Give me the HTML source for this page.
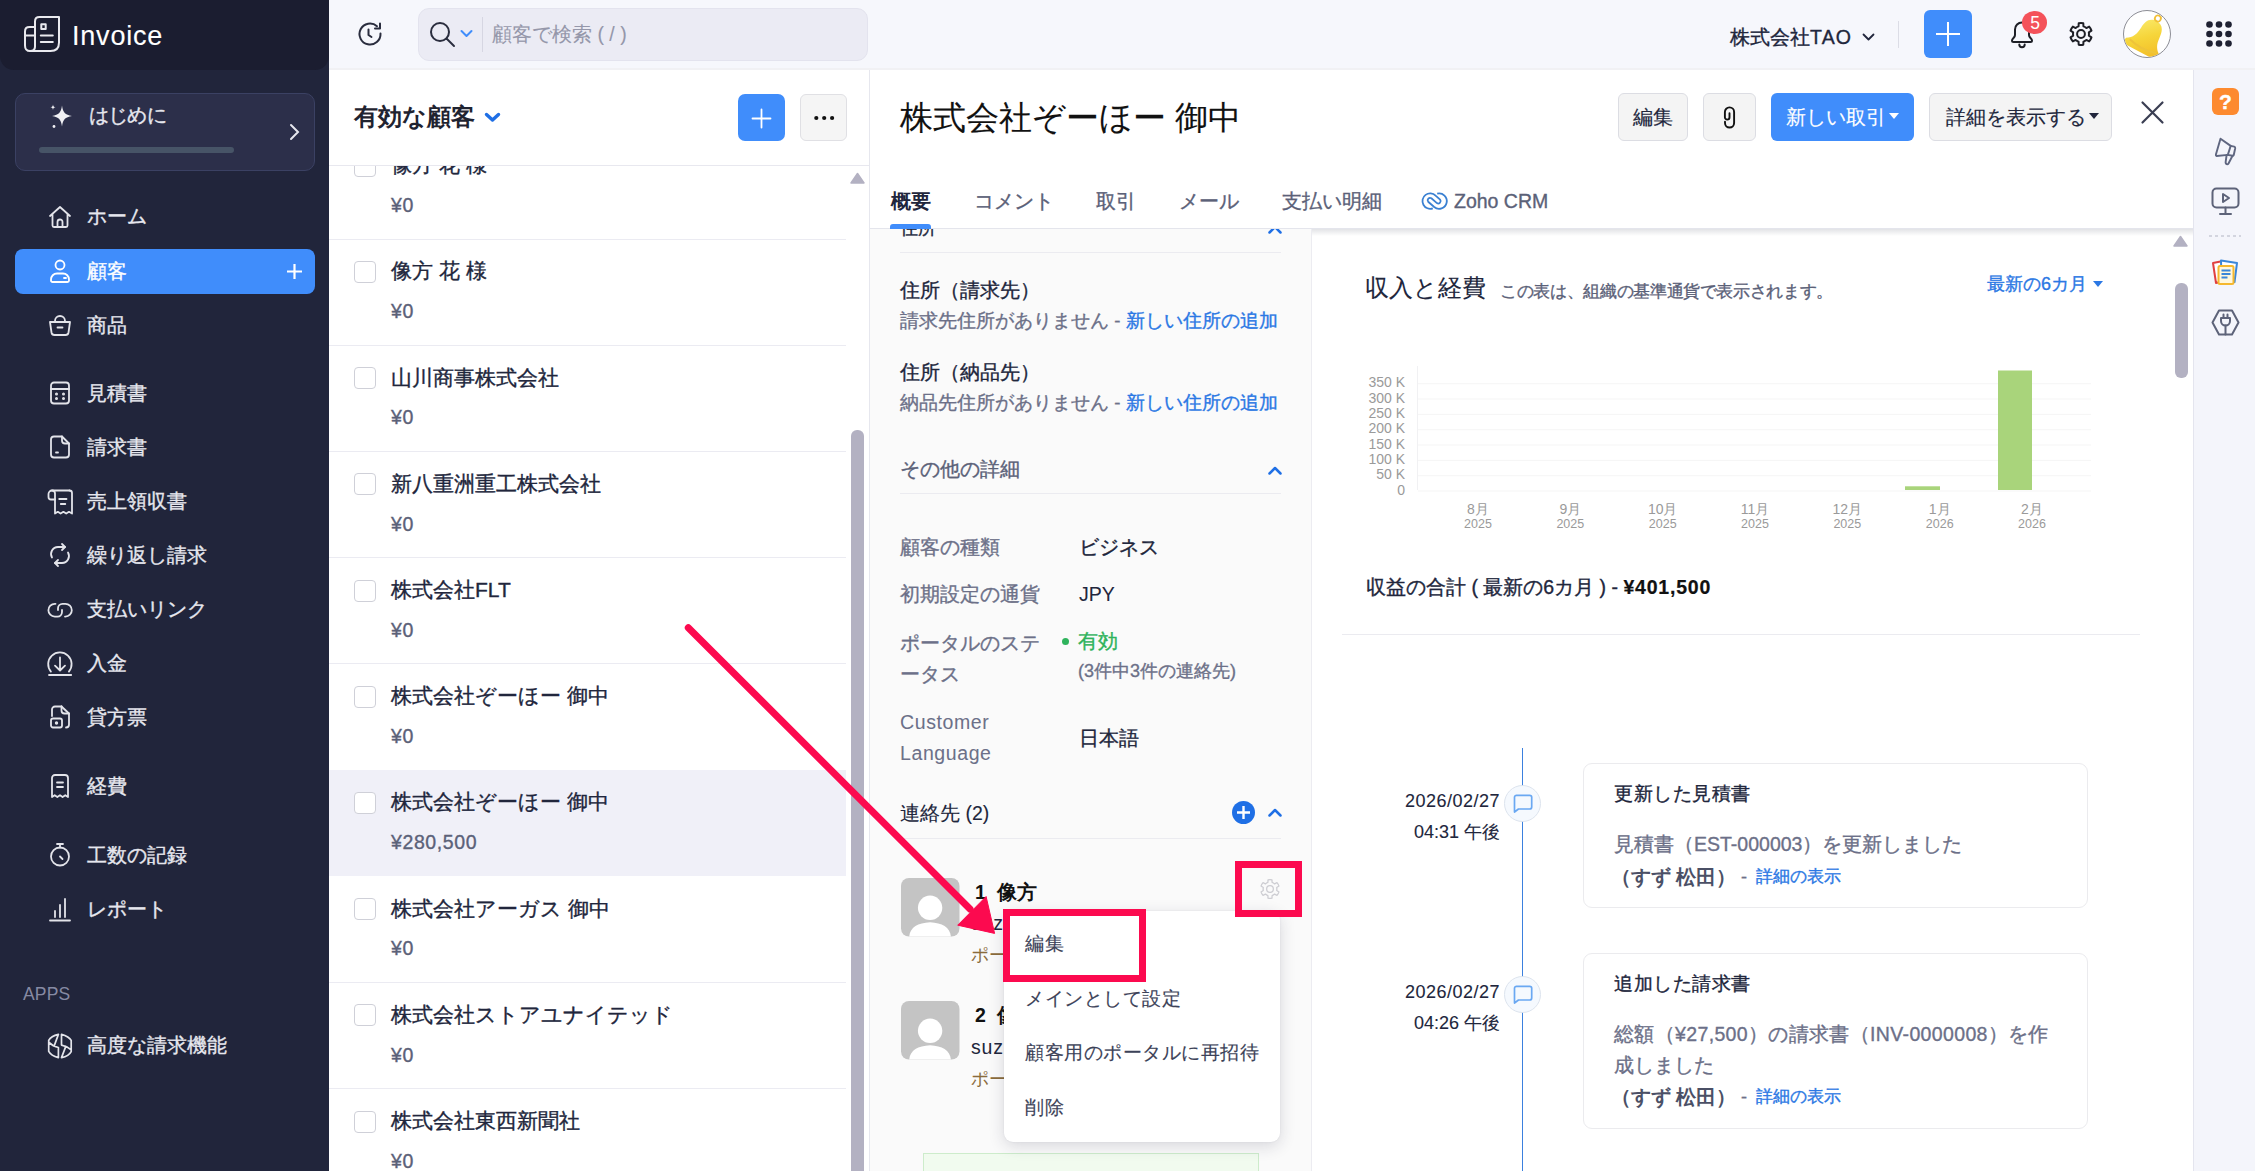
<!DOCTYPE html>
<html><head><meta charset="utf-8">
<style>
*{box-sizing:border-box;margin:0;padding:0}
html,body{width:2255px;height:1171px;overflow:hidden}
body{position:relative;font-family:"Liberation Sans",sans-serif;background:#fff;color:#21263c}
.a{position:absolute}
.t{position:absolute;white-space:nowrap;line-height:30px;-webkit-text-stroke:0.35px currentColor}
svg{position:absolute;overflow:visible}
/* sidebar */
#side{left:0;top:0;width:329px;height:1171px;background:#21253b}
#logo{left:0;top:0;width:329px;height:70px;background:#1b1d30;border-radius:0 0 14px 14px}
.nav{color:#e6e7ee;font-size:19.5px}
.navi{stroke:#e3e4ea;fill:none;stroke-width:1.8;stroke-linecap:round;stroke-linejoin:round}
/* topbar */
#top{left:329px;top:0;width:1926px;height:70px;background:#f6f7fc}
/* list */
#list{left:329px;top:70px;width:541px;height:1101px;background:#fff;border-right:1px solid #e6e7ee}
.cb{position:absolute;left:354px;width:22px;height:22px;border:1.5px solid #cfd0d8;border-radius:4px;background:#fff}
.nm{left:391px;font-size:21px;color:#21263c}
.am{left:391px;font-size:19.5px;color:#5b6178;letter-spacing:0.6px}
.sep{position:absolute;left:329px;width:517px;height:1px;background:#ebebf2}
/* detail */
#det{left:870px;top:70px;width:1323px;height:1101px;background:#fff}
#rail{left:2193px;top:70px;width:62px;height:1101px;background:#f4f5fb;border-left:1px solid #e4e5ee}
.btn{position:absolute;border:1px solid #dcdde3;background:#f4f4f4;border-radius:6px}
</style></head><body>

<!-- SIDEBAR -->
<div id="side" class="a"></div>
<div id="logo" class="a"></div>

<svg style="left:0;top:0" width="80" height="60" viewBox="0 0 80 60" fill="none" stroke="#e9e9ee" stroke-width="2" stroke-linejoin="round" stroke-linecap="round">
<path d="M30 51.1H50.5Q59 51.1 59 42.5V17.1H39.5Q35 17.1 35 21.5V46.6"/><path d="M35 27.1H29.5Q25 27.1 25 31.5V45.5Q25 51.1 30.1 51.1Q35 51.1 35 46.6"/><path d="M25 35.5H35"/>
<rect x="41.3" y="24.3" width="4.4" height="4.7"/><path d="M40.8 35.5H52.8M40.8 42H52.8"/></svg>
<div class="t" style="left:72px;top:19px;font-size:27px;color:#fff;line-height:34px;-webkit-text-stroke:0.1px currentColor;letter-spacing:0.8px">Invoice</div>
<div class="a" style="left:15px;top:93px;width:300px;height:78px;background:#2c2f4a;border:1.5px solid #3b4163;border-radius:10px"></div>
<svg style="left:40px;top:100px" width="40" height="32" viewBox="0 0 40 32" fill="#f0f0f4"><path d="M22 5.5C23 12.5 25 14.8 32 16C25 17.2 23 19.5 22 26.5C21 19.5 19 17.2 12 16C19 14.8 21 12.5 22 5.5z"/><path d="M13 4.5C13.3 6.5 13.8 7 15.6 7.3C13.8 7.6 13.3 8.1 13 10.1C12.7 8.1 12.2 7.6 10.4 7.3C12.2 7 12.7 6.5 13 4.5z"/><circle cx="14" cy="26.5" r="1.4"/></svg>
<div class="t nav" style="left:89px;top:100px;letter-spacing:-0.8px">はじめに</div>
<svg style="left:287px;top:123px" width="14" height="18" viewBox="0 0 14 18" fill="none" stroke="#e6e7ee" stroke-width="2" stroke-linecap="round"><path d="M4 2l7 7l-7 7"/></svg>
<div class="a" style="left:39px;top:147px;width:195px;height:6px;background:#475467;border-radius:3px"></div>

<!-- nav items -->
<svg class="navi" style="left:47px;top:204px" width="26" height="26" viewBox="0 0 26 26"><path d="M3 12L13 3l10 9M5.5 10v11.5a1.5 1.5 0 0 0 1.5 1.5h12a1.5 1.5 0 0 0 1.5-1.5V10"/><path d="M10.5 23v-5a2.5 2.5 0 0 1 5 0v5"/></svg>
<div class="t nav" style="left:87px;top:201px">ホーム</div>

<div class="a" style="left:15px;top:249px;width:300px;height:45px;background:#408dfb;border-radius:8px"></div>
<svg class="navi" style="left:47px;top:258px;stroke:#fff" width="26" height="26" viewBox="0 0 26 26"><circle cx="13" cy="7" r="4.5"/><path d="M4 22.5v-1a6 6 0 0 1 6-6h6a6 6 0 0 1 6 6v1a1.5 1.5 0 0 1-1.5 1.5h-15A1.5 1.5 0 0 1 4 22.5z"/><path d="M17 20h2"/></svg>
<div class="t nav" style="left:87px;top:256px;color:#fff">顧客</div>
<svg style="left:286px;top:263px" width="17" height="17" viewBox="0 0 17 17" stroke="#fff" stroke-width="2.2"><path d="M8.5 1v15M1 8.5h15"/></svg>

<svg class="navi" style="left:47px;top:312px" width="26" height="26" viewBox="0 0 26 26"><path d="M8 9a5 5 0 0 1 10 0"/><path d="M3 10h20l-1.5 10.5a3 3 0 0 1-3 2.5h-11a3 3 0 0 1-3-2.5z"/><path d="M10.5 15.5h5"/></svg>
<div class="t nav" style="left:87px;top:310px">商品</div>

<svg class="navi" style="left:47px;top:380px" width="26" height="26" viewBox="0 0 26 26"><rect x="4" y="2.5" width="18" height="21" rx="3"/><path d="M4 9h18"/><circle cx="9.5" cy="14" r=".6" fill="#e3e4ea"/><circle cx="16.5" cy="14" r=".6" fill="#e3e4ea"/><circle cx="9.5" cy="18.5" r=".6" fill="#e3e4ea"/><circle cx="16.5" cy="18.5" r=".6" fill="#e3e4ea"/></svg>
<div class="t nav" style="left:87px;top:378px">見積書</div>

<svg class="navi" style="left:47px;top:434px" width="26" height="26" viewBox="0 0 26 26"><path d="M15 2.5H7a3 3 0 0 0-3 3v15a3 3 0 0 0 3 3h12a3 3 0 0 0 3-3V9.5z"/><path d="M15 2.5v4a3 3 0 0 0 3 3h4"/><path d="M9 18.5h2"/></svg>
<div class="t nav" style="left:87px;top:432px">請求書</div>

<svg class="navi" style="left:40px;top:485px;stroke-width:1.8" width="40" height="35" viewBox="40 485 40 35"><path d="M69.5 490.5H52A3.5 3.5 0 0 0 48.5 494V497A2.5 2.5 0 0 0 51 499.5H55"/><path d="M52 490.5A3 3 0 0 1 55 493.5V513.5L57.8 511.8L60.6 513.5L63.4 511.8L66.2 513.5L69 511.8L72 513.5V493A2.5 2.5 0 0 0 69.5 490.5"/><path d="M59.2 499H66.5M60.8 504H65.3"/></svg>
<div class="t nav" style="left:87px;top:486px">売上領収書</div>

<svg class="navi" style="left:47px;top:542px" width="26" height="26" viewBox="0 0 26 26"><path d="M15 2l3 3-3 3"/><path d="M18 5H11a7 7 0 0 0-6 10.5"/><path d="M11 24l-3-3 3-3"/><path d="M8 21h7a7 7 0 0 0 6-10.5"/></svg>
<div class="t nav" style="left:87px;top:540px">繰り返し請求</div>

<svg class="navi" style="left:40px;top:590px;stroke-width:1.8" width="40" height="90" viewBox="40 590 40 90"><path d="M55.5 603.8H54.8A6.4 6.4 0 0 0 54.8 616.6H57.5A4.5 4.5 0 0 0 62 612.1V610"/><path d="M65 616.6H65.4A6.4 6.4 0 0 0 65.4 603.8H62.5A4.5 4.5 0 0 0 58 608.3V610"/></svg>
<div class="t nav" style="left:87px;top:594px">支払いリンク</div>

<svg class="navi" style="left:40px;top:640px;stroke-width:1.8" width="40" height="50" viewBox="40 640 40 50"><path d="M50.9 671.6A11.7 11.7 0 1 1 68.9 671.6M60 657.5V670.3M55 665.6L60 670.5L65 665.6M49 675H71.2"/></svg>
<div class="t nav" style="left:87px;top:648px">入金</div>

<svg class="navi" style="left:47px;top:704px" width="26" height="26" viewBox="0 0 26 26"><path d="M14.5 2.5H8a3 3 0 0 0-3 3V12"/><path d="M14.5 2.5v4a3 3 0 0 0 3 3H22"/><path d="M14.5 2.5L22 9.5v11a3 3 0 0 1-3 3"/><rect x="4" y="14.5" width="11" height="9" rx="2"/><circle cx="9.5" cy="19" r=".8" fill="#e3e4ea"/></svg>
<div class="t nav" style="left:87px;top:702px">貸方票</div>

<svg class="navi" style="left:47px;top:773px" width="26" height="26" viewBox="0 0 26 26"><path d="M5 24V5a3 3 0 0 1 3-3h10a3 3 0 0 1 3 3v19l-2.7-1.8-2.7 1.8-2.6-1.8-2.7 1.8-2.6-1.8z"/><path d="M10 9.5h6M10 14h6"/></svg>
<div class="t nav" style="left:87px;top:771px">経費</div>

<svg class="navi" style="left:47px;top:842px" width="26" height="26" viewBox="0 0 26 26"><circle cx="13" cy="14.5" r="9"/><path d="M10 2h6M13 2v3.5M13 14.5l2.5 2.5"/></svg>
<div class="t nav" style="left:87px;top:840px">工数の記録</div>

<svg class="navi" style="left:47px;top:896px" width="26" height="26" viewBox="0 0 26 26"><path d="M8 21v-6M13 21V9M18 21V3M3 24.5h20"/></svg>
<div class="t nav" style="left:87px;top:894px">レポート</div>

<div class="t" style="left:23px;top:980.5px;font-size:17.5px;color:#868aa3;line-height:26px;-webkit-text-stroke:0;letter-spacing:0.2px">APPS</div>

<svg class="navi" style="left:40px;top:1025px;stroke-width:1.7" width="40" height="40" viewBox="0 0 40 40"><path d="M18.4 9.4Q11 11 8.7 15.4V26.3Q11 30.5 18.4 32.6V22.5Q13 21.5 8.7 17.2M18.4 9.4L14.3 20.6"/><path d="M21.5 32.6Q29 31 31.2 26.6V15.4Q29 11.5 21.5 9.4V20.1Q27 21 31.2 24.8M21.5 32.6L25.8 21.4"/></svg>
<div class="t nav" style="left:87px;top:1030px">高度な請求機能</div>

<!-- TOPBAR -->
<div id="top" class="a"></div><div class="a" style="left:329px;top:68px;width:1926px;height:2px;background:#f1f1f4"></div>
<svg style="left:357px;top:21px" width="27" height="27" viewBox="0 0 27 27" fill="none" stroke="#2a2d3e" stroke-width="2" stroke-linecap="round" stroke-linejoin="round"><path d="M23.5 12.5A10.5 10.5 0 1 1 20 5.2"/><path d="M23 2.5v5h-5"/><path d="M11.5 8.5v5.5l3 2"/></svg>
<div class="a" style="left:418px;top:8px;width:450px;height:53px;background:#ebebf4;border:1px solid #e3e3ee;border-radius:11px"></div>
<svg style="left:429px;top:21px" width="27" height="27" viewBox="0 0 27 27" fill="none" stroke="#2a2d3e" stroke-width="2" stroke-linecap="round"><circle cx="11" cy="11" r="9"/><path d="M17.5 17.5l7.5 7.5"/></svg>
<svg style="left:460px;top:29px" width="13" height="9" viewBox="0 0 13 9" fill="none" stroke="#408dfb" stroke-width="2" stroke-linecap="round" stroke-linejoin="round"><path d="M1.5 2l5 5 5-5"/></svg>
<div class="a" style="left:482px;top:17px;width:1px;height:35px;background:#d6d6e2"></div>
<div class="t" style="left:492px;top:19px;font-size:19.5px;color:#9597aa;-webkit-text-stroke:0.1px currentColor">顧客で検索 ( / )</div>

<div class="t" style="left:1730px;top:22px;font-size:19.5px;color:#21263c">株式会社<span style="letter-spacing:1.2px">TAO</span></div>
<svg style="left:1862px;top:32px" width="13" height="10" viewBox="0 0 13 10" fill="none" stroke="#21263c" stroke-width="1.8" stroke-linecap="round" stroke-linejoin="round"><path d="M1.5 2.5l5 5 5-5"/></svg>
<div class="a" style="left:1898px;top:21px;width:1px;height:27px;background:#dcdde6"></div>
<div class="a" style="left:1924px;top:10px;width:48px;height:48px;background:#408dfb;border-radius:6px"></div>
<svg style="left:1936px;top:22px" width="24" height="24" viewBox="0 0 24 24" stroke="#fff" stroke-width="2"><path d="M12 0v24M0 12h24"/></svg>
<svg style="left:2008px;top:19px" width="28" height="30" viewBox="0 0 28 30" fill="none" stroke="#1e1f26" stroke-width="2" stroke-linecap="round" stroke-linejoin="round"><path d="M14 3.5A7 7 0 0 0 7 10.5V16Q7 17.5 5.5 19Q4 20.5 4 21.5Q4 23 5.5 23H22.5Q24 23 24 21.5Q24 20.5 22.5 19Q21 17.5 21 16V10.5A7 7 0 0 0 14 3.5z"/><path d="M11.3 25.5a2.7 2.7 0 0 0 5.4 0"/></svg>
<div class="a" style="left:2022px;top:11px;width:25px;height:22.5px;background:#f4525a;border-radius:50%"></div>
<div class="t" style="left:2022.5px;top:9.3px;width:25px;text-align:center;font-size:17.5px;color:#fff;line-height:28px;-webkit-text-stroke:0">5</div>
<svg style="left:2067px;top:20px" width="28" height="28" viewBox="0 0 28 28" fill="none" stroke="#1e1f26" stroke-width="2" stroke-linejoin="round"><path d="M11.71 3.24A11 11 0 0 1 16.29 3.24L16.47 6.39A8 8 0 0 1 19.35 8.05L22.17 6.64A11 11 0 0 1 24.46 10.60L21.83 12.34A8 8 0 0 1 21.83 15.66L24.46 17.40A11 11 0 0 1 22.17 21.36L19.35 19.95A8 8 0 0 1 16.47 21.61L16.29 24.76A11 11 0 0 1 11.71 24.76L11.53 21.61A8 8 0 0 1 8.65 19.95L5.83 21.36A11 11 0 0 1 3.54 17.40L6.17 15.66A8 8 0 0 1 6.17 12.34L3.54 10.60A11 11 0 0 1 5.83 6.64L8.65 8.05A8 8 0 0 1 11.53 6.39L11.71 3.24z"/><circle cx="14" cy="14" r="3.9"/></svg>
<div class="a" style="left:2123px;top:10px;width:48px;height:48px;border-radius:50%;background:#fff;border:1.2px solid #8d8e96;overflow:hidden">
<svg style="left:0;top:0" width="46" height="46" viewBox="0 0 46 46"><defs><linearGradient id="bg1" x1="0" y1="0" x2="1" y2="1"><stop offset="0" stop-color="#fbf07a"/><stop offset=".5" stop-color="#f6d53a"/><stop offset="1" stop-color="#f2b824"/></linearGradient></defs>
<g transform="rotate(28 24 26)"><path d="M24 8C16 8 14 14 13.5 21C13 29 11 33 5 37C4 39 6 43 10 43L38 43C42 43 44 39 43 37C37 33 35 29 34.5 21C34 14 32 8 24 8z" fill="url(#bg1)"/><path d="M9 36.5Q24 41 39 36.5" stroke="#eec43a" stroke-width="2" fill="none"/><circle cx="24" cy="5" r="3" fill="none" stroke="#f2c038" stroke-width="1.8"/></g></svg></div>
<svg style="left:2206px;top:21px" width="26" height="26" viewBox="0 0 26 26" fill="#1e2132"><circle cx="3.5" cy="3.5" r="3.3"/><circle cx="13" cy="3.5" r="3.3"/><circle cx="22.5" cy="3.5" r="3.3"/><circle cx="3.5" cy="13" r="3.3"/><circle cx="13" cy="13" r="3.3"/><circle cx="22.5" cy="13" r="3.3"/><circle cx="3.5" cy="22.5" r="3.3"/><circle cx="13" cy="22.5" r="3.3"/><circle cx="22.5" cy="22.5" r="3.3"/></svg>

<!-- LIST -->
<div id="list" class="a"></div>
<div class="t" style="left:354px;top:100px;font-size:23.5px;font-weight:bold;color:#1f2330;line-height:34px;-webkit-text-stroke:0">有効な顧客</div>
<svg style="left:484px;top:111px" width="17" height="13" viewBox="0 0 17 13" fill="none" stroke="#1f6fe5" stroke-width="3.4" stroke-linecap="round" stroke-linejoin="round"><path d="M2.5 3.5l6 5.5 6-5.5"/></svg>
<div class="a" style="left:738px;top:94px;width:47px;height:47px;background:#408dfb;border-radius:7px"></div>
<svg style="left:751px;top:107.5px" width="21" height="21" viewBox="0 0 21 21" stroke="#fff" stroke-width="1.8" stroke-linecap="round"><path d="M10.5 1.5v18M1.5 10.5h18"/></svg>
<div class="btn" style="left:800px;top:94px;width:47px;height:47px;background:#f5f5f5;border-color:#e0e0e4"></div>
<svg style="left:813px;top:115px" width="22" height="6" viewBox="0 0 22 6" fill="#111"><circle cx="3.3" cy="3" r="2.1"/><circle cx="11.2" cy="3" r="2.1"/><circle cx="19.1" cy="3" r="2.1"/></svg>
<div id="rows" class="a" style="left:0;top:165px;width:869px;height:1006px;overflow:hidden">
<div class="cb" style="top:-10.2px"></div>
<div class="t nm" style="top:-14.8px">像方 花 様</div>
<div class="t am" style="top:24.9px">¥0</div>
<div class="sep" style="top:73.5px"></div>
<div class="cb" style="top:96.0px"></div>
<div class="t nm" style="top:91.4px">像方 花 様</div>
<div class="t am" style="top:131.1px">¥0</div>
<div class="sep" style="top:179.7px"></div>
<div class="cb" style="top:202.2px"></div>
<div class="t nm" style="top:197.6px">山川商事株式会社</div>
<div class="t am" style="top:237.3px">¥0</div>
<div class="sep" style="top:285.9px"></div>
<div class="cb" style="top:308.4px"></div>
<div class="t nm" style="top:303.8px">新八重洲重工株式会社</div>
<div class="t am" style="top:343.5px">¥0</div>
<div class="sep" style="top:392.1px"></div>
<div class="cb" style="top:414.6px"></div>
<div class="t nm" style="top:410.0px">株式会社FLT</div>
<div class="t am" style="top:449.7px">¥0</div>
<div class="sep" style="top:498.3px"></div>
<div class="cb" style="top:520.8px"></div>
<div class="t nm" style="top:516.2px">株式会社ぞーほー 御中</div>
<div class="t am" style="top:555.9px">¥0</div>
<div class="a" style="left:329px;top:604.5px;width:517px;height:106.2px;background:#f0f0f8"></div>
<div class="cb" style="top:627.0px"></div>
<div class="t nm" style="top:622.4px">株式会社ぞーほー 御中</div>
<div class="t am" style="top:662.1px">¥280,500</div>
<div class="cb" style="top:733.2px"></div>
<div class="t nm" style="top:728.6px">株式会社アーガス 御中</div>
<div class="t am" style="top:768.3px">¥0</div>
<div class="sep" style="top:816.9px"></div>
<div class="cb" style="top:839.4px"></div>
<div class="t nm" style="top:834.8px">株式会社ストアユナイテッド</div>
<div class="t am" style="top:874.5px">¥0</div>
<div class="sep" style="top:923.1px"></div>
<div class="cb" style="top:945.6px"></div>
<div class="t nm" style="top:941.0px">株式会社東西新聞社</div>
<div class="t am" style="top:980.7px">¥0</div>
<div class="a" style="left:848px;top:0;width:18px;height:1006px;background:#fff"></div>
<svg style="left:850px;top:7px" width="15" height="12" viewBox="0 0 15 12"><path d="M7.5 1.5L14 11H1z" fill="#b3b1c2" stroke="#b3b1c2" stroke-width="1.5" stroke-linejoin="round"/></svg>
<div class="a" style="left:851px;top:265px;width:13px;height:760px;background:#b3b1c2;border-radius:6px"></div>
</div>
<div class="a" style="left:329px;top:165px;width:540px;height:1px;background:#e8e8ef"></div>

<!-- DETAIL -->
<div id="det" class="a"></div>
<div class="t" style="left:900px;top:98px;font-size:33px;color:#111;line-height:40px;-webkit-text-stroke:0.1px currentColor">株式会社ぞーほー 御中</div>
<div class="btn" style="left:1618px;top:93px;width:70px;height:48px"></div>
<div class="t" style="left:1618px;top:102px;width:70px;text-align:center;font-size:19.5px;color:#21263c;-webkit-text-stroke:0.15px currentColor">編集</div>
<div class="btn" style="left:1703px;top:93px;width:53px;height:48px"></div>
<svg style="left:1715px;top:100px" width="30" height="35" viewBox="0 0 30 35" fill="none" stroke="#111" stroke-width="1.9" stroke-linecap="round"><path d="M10 21.8V23A4.55 4.55 0 0 0 19.1 23V12A4.6 4.6 0 0 0 9.9 12V17.3A2.3 2.3 0 0 0 14.5 17.3V13.2"/></svg>
<div class="a" style="left:1771px;top:93px;width:143px;height:48px;background:#408dfb;border-radius:6px"></div>
<div class="t" style="left:1786px;top:102px;font-size:19.5px;color:#fff;-webkit-text-stroke:0.15px currentColor">新しい取引</div>
<svg style="left:1889px;top:113px" width="10" height="6" viewBox="0 0 10 6" fill="#fff"><path d="M0 0h10L5 6z"/></svg>
<div class="btn" style="left:1929px;top:93px;width:183px;height:48px"></div>
<div class="t" style="left:1946px;top:102px;font-size:19.5px;color:#21263c;-webkit-text-stroke:0.15px currentColor">詳細を表示する</div>
<svg style="left:2089px;top:113px" width="10" height="6" viewBox="0 0 10 6" fill="#21263c"><path d="M0 0h10L5 6z"/></svg>
<svg style="left:2141px;top:101px" width="23" height="23" viewBox="0 0 23 23" stroke="#3a3e52" stroke-width="2.2" stroke-linecap="round"><path d="M1.5 1.5l20 20M21.5 1.5l-20 20"/></svg>

<!-- tabs -->
<div class="t" style="left:891px;top:186px;font-size:19.5px;font-weight:bold;color:#21263c;-webkit-text-stroke:0">概要</div>
<div class="t" style="left:974px;top:186px;font-size:19.5px;color:#5b6178">コメント</div>
<div class="t" style="left:1096px;top:186px;font-size:19.5px;color:#5b6178">取引</div>
<div class="t" style="left:1179px;top:186px;font-size:19.5px;color:#5b6178">メール</div>
<div class="t" style="left:1282px;top:186px;font-size:19.5px;color:#5b6178">支払い明細</div>
<svg style="left:1415px;top:185px" width="40" height="35" viewBox="0 0 40 35" fill="none" stroke="#3a80d2" stroke-width="1.8" stroke-linecap="butt"><path d="M17.8 23.3A7.7 7.7 0 1 1 20.6 10.6L25.1 14.6A2.4 2.4 0 0 1 21.9 18.1L16.4 13.3A2.4 2.4 0 0 0 13.2 16.8L19.2 22A7.7 7.7 0 1 0 22.2 8.6"/></svg>
<div class="t" style="left:1454px;top:186px;font-size:19.5px;color:#5b6178">Zoho CRM</div>

<!-- left column -->
<div class="a" style="left:870px;top:229px;width:442px;height:942px;background:#fafafa;border-right:1px solid #ececf1"></div>
<div class="a" style="left:870px;top:228px;width:1323px;height:1px;background:#e4e5ec"></div>
<div class="a" style="left:1312px;top:229px;width:881px;height:7px;background:linear-gradient(#e2e3e6,rgba(255,255,255,0))"></div>
<div class="a" style="left:890px;top:224px;width:41px;height:5px;background:#408dfb;border-radius:3px 3px 0 0"></div>
<div class="a" style="left:870px;top:229px;width:442px;height:28px;overflow:hidden">
 <div class="t" style="left:30px;top:-16px;font-size:18px;color:#21263c">住所</div>
 <svg style="left:398px;top:-4px" width="14" height="9" viewBox="0 0 14 9" fill="none" stroke="#1f6fe5" stroke-width="2.5" stroke-linecap="round" stroke-linejoin="round"><path d="M1.5 7.5l5.5-5.5 5.5 5.5"/></svg>
</div>
<div class="a" style="left:900px;top:252px;width:381px;height:1px;background:#ebebf0"></div>
<div class="t" style="left:900px;top:275px;font-size:19.5px;color:#21263c">住所（請求先）</div>
<div class="t" style="left:900px;top:306px;font-size:18.6px;color:#6c7088">請求先住所がありません - <span style="color:#2b78e4">新しい住所の追加</span></div>
<div class="t" style="left:900px;top:357px;font-size:19.5px;color:#21263c">住所（納品先）</div>
<div class="t" style="left:900px;top:388px;font-size:18.6px;color:#6c7088">納品先住所がありません - <span style="color:#2b78e4">新しい住所の追加</span></div>
<div class="t" style="left:900px;top:454px;font-size:19.5px;color:#5b6178">その他の詳細</div>
<svg style="left:1268px;top:466px" width="14" height="9" viewBox="0 0 14 9" fill="none" stroke="#1f6fe5" stroke-width="2.5" stroke-linecap="round" stroke-linejoin="round"><path d="M1.5 7.5l5.5-5.5 5.5 5.5"/></svg>
<div class="a" style="left:900px;top:493px;width:381px;height:1px;background:#ebebf0"></div>

<div class="t" style="left:900px;top:532px;font-size:19.5px;color:#6c7088">顧客の種類</div>
<div class="t" style="left:1079px;top:532px;font-size:19.5px;color:#21263c">ビジネス</div>
<div class="t" style="left:900px;top:579px;font-size:19.5px;color:#6c7088">初期設定の通貨</div>
<div class="t" style="left:1079px;top:579px;font-size:19.5px;color:#21263c;-webkit-text-stroke:0.05px currentColor">JPY</div>
<div class="t" style="left:900px;top:628px;font-size:19.5px;color:#6c7088">ポータルのステ</div>
<div class="t" style="left:900px;top:659px;font-size:19.5px;color:#6c7088">ータス</div>
<div class="a" style="left:1062px;top:638px;width:7px;height:7px;border-radius:50%;background:#2fb35c"></div>
<div class="t" style="left:1078px;top:626px;font-size:19.5px;color:#2fb35c">有効</div>
<div class="t" style="left:1078px;top:656px;font-size:18px;color:#6c7088">(3件中3件の連絡先)</div>
<div class="t" style="left:900px;top:707px;font-size:19.5px;color:#6c7088;-webkit-text-stroke:0.05px currentColor;letter-spacing:0.6px">Customer</div>
<div class="t" style="left:900px;top:738px;font-size:19.5px;color:#6c7088;-webkit-text-stroke:0.05px currentColor;letter-spacing:0.6px">Language</div>
<div class="t" style="left:1079px;top:723px;font-size:19.5px;color:#21263c">日本語</div>

<div class="t" style="left:900px;top:798px;font-size:19.5px;color:#21263c;-webkit-text-stroke:0.1px currentColor">連絡先 (2)</div>
<svg style="left:1232px;top:801px" width="23" height="23" viewBox="0 0 23 23"><circle cx="11.5" cy="11.5" r="11.5" fill="#1f6fe5"/><path d="M11.5 5v13M5 11.5h13" stroke="#fff" stroke-width="2.4"/></svg>
<svg style="left:1268px;top:808px" width="14" height="9" viewBox="0 0 14 9" fill="none" stroke="#1f6fe5" stroke-width="2.5" stroke-linecap="round" stroke-linejoin="round"><path d="M1.5 7.5l5.5-5.5 5.5 5.5"/></svg>
<div class="a" style="left:900px;top:838px;width:381px;height:1px;background:#ebebf0"></div>

<!-- contacts -->
<svg style="left:901px;top:877.7px" width="58.5" height="58.6" viewBox="0 0 58.5 58.6"><rect width="58.5" height="58.6" rx="8" fill="#c4c4c4"/><circle cx="29.1" cy="29.8" r="12.2" fill="#fff"/><path d="M8.2 58.6C9 49 17 44.8 29.1 44.2C41 44.8 49 49 49.9 58.6z" fill="#fff"/></svg>
<div class="t" style="left:975px;top:877px;font-size:19.5px;font-weight:bold;color:#111;-webkit-text-stroke:0">1&nbsp; 像方</div>
<div class="t" style="left:971px;top:908px;font-size:19.5px;color:#21263c;-webkit-text-stroke:0;letter-spacing:0.8px">suzuki</div>
<div class="t" style="left:971px;top:940px;font-size:18px;color:#8b6c3c;-webkit-text-stroke:0.05px currentColor">ポータル</div>
<svg style="left:1258px;top:877px" width="24" height="24" viewBox="0 0 28 28" fill="none" stroke="#cdcdd2" stroke-width="1.5" stroke-linejoin="round"><path d="M11.71 3.24A11 11 0 0 1 16.29 3.24L16.47 6.39A8 8 0 0 1 19.35 8.05L22.17 6.64A11 11 0 0 1 24.46 10.60L21.83 12.34A8 8 0 0 1 21.83 15.66L24.46 17.40A11 11 0 0 1 22.17 21.36L19.35 19.95A8 8 0 0 1 16.47 21.61L16.29 24.76A11 11 0 0 1 11.71 24.76L11.53 21.61A8 8 0 0 1 8.65 19.95L5.83 21.36A11 11 0 0 1 3.54 17.40L6.17 15.66A8 8 0 0 1 6.17 12.34L3.54 10.60A11 11 0 0 1 5.83 6.64L8.65 8.05A8 8 0 0 1 11.53 6.39L11.71 3.24z"/><circle cx="14" cy="14" r="3.9"/></svg>

<svg style="left:901px;top:1000.7px" width="58.5" height="58.6" viewBox="0 0 58.5 58.6"><rect width="58.5" height="58.6" rx="8" fill="#c4c4c4"/><circle cx="29.1" cy="29.8" r="12.2" fill="#fff"/><path d="M8.2 58.6C9 49 17 44.8 29.1 44.2C41 44.8 49 49 49.9 58.6z" fill="#fff"/></svg>
<div class="t" style="left:975px;top:1000px;font-size:19.5px;font-weight:bold;color:#111;-webkit-text-stroke:0">2&nbsp; 像方</div>
<div class="t" style="left:971px;top:1032px;font-size:19.5px;color:#21263c;-webkit-text-stroke:0;letter-spacing:0.8px">suzuki</div>
<div class="t" style="left:971px;top:1064px;font-size:18px;color:#8b6c3c;-webkit-text-stroke:0.05px currentColor">ポータル</div>
<div class="a" style="left:923px;top:1153px;width:336px;height:30px;background:#f1fbef;border:1px solid #cdeccb"></div>

<!-- right column -->
<div class="t" style="left:1365px;top:271px;font-size:24px;color:#21263c;line-height:34px;-webkit-text-stroke:0.1px currentColor">収入と経費</div>
<div class="t" style="left:1500px;top:279px;font-size:16.5px;color:#5b6178;line-height:24px;letter-spacing:-0.35px">この表は、組織の基準通貨で表示されます。</div>
<div class="t" style="left:1987px;top:269px;font-size:18px;color:#2b78e4">最新の6カ月</div>
<svg style="left:2093px;top:281px" width="10" height="6" viewBox="0 0 10 6" fill="#2b78e4"><path d="M0 0h10L5 6z"/></svg>
<svg style="left:2173px;top:235px" width="15" height="12" viewBox="0 0 15 12"><path d="M7.5 1.5L14 11H1z" fill="#b3b1c2" stroke="#b3b1c2" stroke-width="1.5" stroke-linejoin="round"/></svg>
<div class="a" style="left:2175px;top:283px;width:13px;height:95px;background:#b3b1c2;border-radius:6px"></div>

<div class="t" style="left:1345px;top:372.2px;width:60px;text-align:right;font-size:14px;color:#9a9a9a;line-height:20px;-webkit-text-stroke:0">350 K</div>
<div class="t" style="left:1345px;top:387.5px;width:60px;text-align:right;font-size:14px;color:#9a9a9a;line-height:20px;-webkit-text-stroke:0">300 K</div>
<div class="t" style="left:1345px;top:402.9px;width:60px;text-align:right;font-size:14px;color:#9a9a9a;line-height:20px;-webkit-text-stroke:0">250 K</div>
<div class="t" style="left:1345px;top:418.2px;width:60px;text-align:right;font-size:14px;color:#9a9a9a;line-height:20px;-webkit-text-stroke:0">200 K</div>
<div class="t" style="left:1345px;top:433.5px;width:60px;text-align:right;font-size:14px;color:#9a9a9a;line-height:20px;-webkit-text-stroke:0">150 K</div>
<div class="t" style="left:1345px;top:448.9px;width:60px;text-align:right;font-size:14px;color:#9a9a9a;line-height:20px;-webkit-text-stroke:0">100 K</div>
<div class="t" style="left:1345px;top:464.2px;width:60px;text-align:right;font-size:14px;color:#9a9a9a;line-height:20px;-webkit-text-stroke:0">50 K</div>
<div class="t" style="left:1345px;top:479.5px;width:60px;text-align:right;font-size:14px;color:#9a9a9a;line-height:20px;-webkit-text-stroke:0">0</div>
<svg style="left:0;top:0" width="2255" height="1171" viewBox="0 0 2255 1171">
<rect x="1418" y="383.2" width="673" height="1" fill="#f5f5f6"/>
<rect x="1418" y="398.5" width="673" height="1" fill="#f5f5f6"/>
<rect x="1418" y="413.9" width="673" height="1" fill="#f5f5f6"/>
<rect x="1418" y="429.2" width="673" height="1" fill="#f5f5f6"/>
<rect x="1418" y="444.5" width="673" height="1" fill="#f5f5f6"/>
<rect x="1418" y="459.9" width="673" height="1" fill="#f5f5f6"/>
<rect x="1418" y="475.2" width="673" height="1" fill="#f5f5f6"/>
<rect x="1418" y="490.5" width="673" height="1" fill="#f5f5f6"/>
<rect x="1417" y="366" width="1" height="124" fill="#f1f1f3"/>
<rect x="1905" y="486.3" width="35" height="3.7" fill="#a9d47b"/>
<rect x="1998" y="370.5" width="34" height="119.5" fill="#a9d47b"/>
</svg>
<div class="t" style="left:1438.0px;top:499px;width:80px;text-align:center;font-size:14px;color:#9a9a9a;line-height:20px;-webkit-text-stroke:0">8月</div>
<div class="t" style="left:1438.0px;top:515px;width:80px;text-align:center;font-size:12.5px;color:#9a9a9a;line-height:18px;-webkit-text-stroke:0">2025</div>
<div class="t" style="left:1530.3px;top:499px;width:80px;text-align:center;font-size:14px;color:#9a9a9a;line-height:20px;-webkit-text-stroke:0">9月</div>
<div class="t" style="left:1530.3px;top:515px;width:80px;text-align:center;font-size:12.5px;color:#9a9a9a;line-height:18px;-webkit-text-stroke:0">2025</div>
<div class="t" style="left:1622.7px;top:499px;width:80px;text-align:center;font-size:14px;color:#9a9a9a;line-height:20px;-webkit-text-stroke:0">10月</div>
<div class="t" style="left:1622.7px;top:515px;width:80px;text-align:center;font-size:12.5px;color:#9a9a9a;line-height:18px;-webkit-text-stroke:0">2025</div>
<div class="t" style="left:1715.0px;top:499px;width:80px;text-align:center;font-size:14px;color:#9a9a9a;line-height:20px;-webkit-text-stroke:0">11月</div>
<div class="t" style="left:1715.0px;top:515px;width:80px;text-align:center;font-size:12.5px;color:#9a9a9a;line-height:18px;-webkit-text-stroke:0">2025</div>
<div class="t" style="left:1807.3px;top:499px;width:80px;text-align:center;font-size:14px;color:#9a9a9a;line-height:20px;-webkit-text-stroke:0">12月</div>
<div class="t" style="left:1807.3px;top:515px;width:80px;text-align:center;font-size:12.5px;color:#9a9a9a;line-height:18px;-webkit-text-stroke:0">2025</div>
<div class="t" style="left:1899.7px;top:499px;width:80px;text-align:center;font-size:14px;color:#9a9a9a;line-height:20px;-webkit-text-stroke:0">1月</div>
<div class="t" style="left:1899.7px;top:515px;width:80px;text-align:center;font-size:12.5px;color:#9a9a9a;line-height:18px;-webkit-text-stroke:0">2026</div>
<div class="t" style="left:1992.0px;top:499px;width:80px;text-align:center;font-size:14px;color:#9a9a9a;line-height:20px;-webkit-text-stroke:0">2月</div>
<div class="t" style="left:1992.0px;top:515px;width:80px;text-align:center;font-size:12.5px;color:#9a9a9a;line-height:18px;-webkit-text-stroke:0">2026</div>
<div class="t" style="left:1366px;top:572px;font-size:19.5px;color:#21263c">収益の合計 ( 最新の6カ月 ) - <b style="color:#111;letter-spacing:0.8px;-webkit-text-stroke:0.2px currentColor">¥401,500</b></div>
<div class="a" style="left:1342px;top:634px;width:798px;height:1px;background:#ebebf0"></div>
<div class="a" style="left:1521.8px;top:748px;width:1.4px;height:423px;background:#3b80de"></div>
<div class="a" style="left:1503.5px;top:784.9px;width:37px;height:37px;border-radius:50%;background:#f5f9fe;border:1px solid #dde4ee"></div>
<svg style="left:1512.5px;top:793.7px" width="20" height="20" viewBox="0 0 20 20" fill="none" stroke="#6aa8f2" stroke-width="1.7" stroke-linejoin="round"><path d="M3.3 1.3H16.7A2 2 0 0 1 18.7 3.3V13A2 2 0 0 1 16.7 15H5.5L1.5 18V3.3A2 2 0 0 1 3.5 1.3z"/></svg>
<div class="t" style="left:1300px;top:785.9px;width:200px;text-align:right;font-size:18px;color:#21263c;letter-spacing:0.5px;-webkit-text-stroke:0.1px currentColor">2026/02/27</div>
<div class="t" style="left:1300px;top:816.9px;width:200px;text-align:right;font-size:18px;color:#21263c;-webkit-text-stroke:0.1px currentColor">04:31 午後</div>
<div class="a" style="left:1503.5px;top:975.7px;width:37px;height:37px;border-radius:50%;background:#f5f9fe;border:1px solid #dde4ee"></div>
<svg style="left:1512.5px;top:984.5px" width="20" height="20" viewBox="0 0 20 20" fill="none" stroke="#6aa8f2" stroke-width="1.7" stroke-linejoin="round"><path d="M3.3 1.3H16.7A2 2 0 0 1 18.7 3.3V13A2 2 0 0 1 16.7 15H5.5L1.5 18V3.3A2 2 0 0 1 3.5 1.3z"/></svg>
<div class="t" style="left:1300px;top:976.7px;width:200px;text-align:right;font-size:18px;color:#21263c;letter-spacing:0.5px;-webkit-text-stroke:0.1px currentColor">2026/02/27</div>
<div class="t" style="left:1300px;top:1007.7px;width:200px;text-align:right;font-size:18px;color:#21263c;-webkit-text-stroke:0.1px currentColor">04:26 午後</div>
<div class="a" style="left:1583px;top:763px;width:505px;height:145px;border:1px solid #ebebee;border-radius:9px;background:#fff"></div>
<div class="t" style="left:1614px;top:779px;font-size:19px;color:#21263c;letter-spacing:0.5px">更新した見積書</div>
<div class="t" style="left:1614px;top:829px;font-size:19.5px;color:#6c7088">見積書（EST-000003）を更新しました</div>
<div class="t" style="left:1611px;top:862px;font-size:19.5px;color:#4b5066;font-weight:bold;-webkit-text-stroke:0">（すず 松田）</div><div class="t" style="left:1741px;top:862px;font-size:18px;color:#6c7088">-</div><div class="t" style="left:1756px;top:862px;font-size:17px;color:#2b78e4">詳細の表示</div>
<div class="a" style="left:1583px;top:953px;width:505px;height:176px;border:1px solid #ebebee;border-radius:9px;background:#fff"></div>
<div class="t" style="left:1614px;top:969px;font-size:19px;color:#21263c;letter-spacing:0.5px">追加した請求書</div>
<div class="t" style="left:1614px;top:1019px;font-size:19.5px;color:#6c7088;letter-spacing:0.35px">総額（¥27,500）の請求書（INV-0000008）を作</div>
<div class="t" style="left:1614px;top:1050px;font-size:19.5px;color:#6c7088">成しました</div>
<div class="t" style="left:1611px;top:1082px;font-size:19.5px;color:#4b5066;font-weight:bold;-webkit-text-stroke:0">（すず 松田）</div><div class="t" style="left:1741px;top:1082px;font-size:18px;color:#6c7088">-</div><div class="t" style="left:1756px;top:1082px;font-size:17px;color:#2b78e4">詳細の表示</div>
<div id="rail" class="a"></div>
<div class="a" style="left:2212px;top:88px;width:27px;height:27px;background:#fd8a2f;border-radius:6px"></div>
<div class="t" style="left:2212px;top:87px;width:27px;text-align:center;font-size:21px;font-weight:bold;color:#fff;line-height:29px">?</div>
<svg style="left:2210px;top:130px" width="30" height="40" viewBox="0 0 30 40" fill="none" stroke="#5f6680" stroke-width="1.9" stroke-linejoin="round" stroke-linecap="round"><path d="M10.5 8.7L20.7 15.9L17.8 24.9L6.7 26Q5.6 25.6 5.9 24.4z"/><path d="M20.7 15.9L24.2 16.6Q25.4 17 25.2 18.2L23.7 25.2Q23.3 26 22.5 25.8L17.8 24.9"/><path d="M16.6 25L15.6 32.4Q15.8 34.3 17.3 34.3Q18 34.3 18.5 33.5L22.5 25.7"/></svg>
<svg style="left:2211px;top:187px" width="29" height="29" viewBox="0 0 29 29" fill="none" stroke="#5d6379" stroke-width="2" stroke-linejoin="round" stroke-linecap="round"><rect x="1.5" y="1.5" width="26" height="19" rx="4"/><path d="M12 7v8l6-4z"/><path d="M14.5 20.5v6M9 27h11"/></svg>
<div class="a" style="left:2209px;top:235px;width:32px;height:2px;background:repeating-linear-gradient(90deg,#d3d5df 0 3px,transparent 3px 6px)"></div>
<svg style="left:2211px;top:258px" width="29" height="28" viewBox="0 0 29 28"><path d="M2 5l10-2 2 20-9 2z" fill="#fff" stroke="#e04040" stroke-width="2" stroke-linejoin="round"/><path d="M10 2.5l16 2.5-2.5 19-13-2z" fill="#fff" stroke="#3a86d8" stroke-width="2" stroke-linejoin="round"/><rect x="7.5" y="8" width="15" height="18" rx="1.5" fill="#fff7dc" stroke="#f5b82e" stroke-width="2"/><path d="M10.5 12.5h9M10.5 16h9M10.5 19.5h6" stroke="#3a86d8" stroke-width="2"/></svg>
<svg style="left:2211px;top:309px" width="29" height="27" viewBox="0 0 29 27" fill="none" stroke="#5d6379" stroke-width="2" stroke-linejoin="round" stroke-linecap="round"><path d="M8 1.5h13l6.5 12-6.5 12H8L1.5 13.5z"/><path d="M10 9h9v3a4.5 4.5 0 0 1-9 0z"/><path d="M12.5 9V5.5M16.5 9V5.5M14.5 16.5v9"/></svg>
<div class="a" style="left:1004px;top:911px;width:276px;height:231px;background:#fff;border-radius:9px;box-shadow:0 4px 16px rgba(30,30,60,.16),0 0 2px rgba(30,30,60,.08)"></div>
<div class="t" style="left:1025px;top:929px;font-size:19px;color:#3c4258;-webkit-text-stroke:0.15px currentColor;letter-spacing:0.5px">編集</div>
<div class="t" style="left:1025px;top:984px;font-size:19px;color:#3c4258;-webkit-text-stroke:0.15px currentColor;letter-spacing:0.5px">メインとして設定</div>
<div class="t" style="left:1025px;top:1038px;font-size:19px;color:#3c4258;-webkit-text-stroke:0.15px currentColor;letter-spacing:0.5px">顧客用のポータルに再招待</div>
<div class="t" style="left:1025px;top:1093px;font-size:19px;color:#3c4258;-webkit-text-stroke:0.15px currentColor;letter-spacing:0.5px">削除</div>
<div class="a" style="left:1235px;top:861px;width:67px;height:56px;border:7px solid #fc0a4f"></div>
<div class="a" style="left:1003px;top:909.3px;width:143px;height:72.7px;border:7px solid #fc0a4f"></div>
<svg style="left:0;top:0" width="2255" height="1171" viewBox="0 0 2255 1171"><path d="M688.3 627.7L970 909" stroke="#fc0a4f" stroke-width="7" stroke-linecap="round"/><path d="M994.6 933.4L957.7 925.2L986.1 896.5z" fill="#fc0a4f" stroke="#fc0a4f" stroke-width="1" stroke-linejoin="round"/></svg>
</body></html>
